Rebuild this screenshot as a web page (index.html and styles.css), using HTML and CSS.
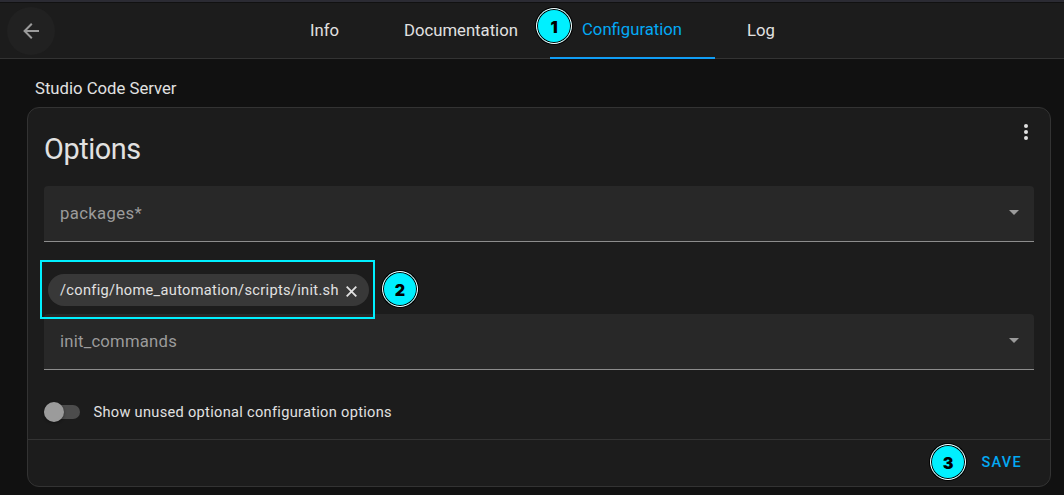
FILE: index.html
```html
<!DOCTYPE html>
<html lang="en">
<head>
<meta charset="utf-8">
<title>Studio Code Server</title>
<link rel="stylesheet" href="styles.css">
</head>
<body>
<header class="toolbar">
  <button class="back" aria-label="Back"><svg viewBox="0 0 24 24" width="24" height="24"><path d="M20 11v2H8l5.500 5.500-1.420 1.420L4.160 12l7.920-7.920L13.500 5.500 8 11z"/></svg></button>
  <nav class="tabs">
    <a class="tab info">Info</a>
    <a class="tab docs">Documentation</a>
    <a class="tab active">Configuration</a>
    <a class="tab log">Log</a>
  </nav>
</header>
<main class="content">
  <h2 class="addon">Studio Code Server</h2>
  <section class="card">
    <div class="card-body">
      <div class="card-head">
        <h1 class="title">Options</h1>
        <svg class="dots" viewBox="0 0 24 24" width="24" height="24"><circle cx="12" cy="6" r="2"/><circle cx="12" cy="12" r="2"/><circle cx="12" cy="18" r="2"/></svg>
      </div>
      <div class="field"><span class="label packages">packages*</span><i class="caret"></i></div>
      <div class="chips">
        <div class="chip"><span class="path">/config/home_automation/scripts/init.sh</span><svg viewBox="0 0 11 11" width="11" height="11"><path d="M.7.7l9.600 9.600M10.300.7L.7 10.300"/></svg></div>
      </div>
      <div class="field"><span class="label commands">init_commands</span><i class="caret"></i></div>
      <div class="switch-row"><span class="switch"><i class="thumb"></i></span><span class="switch-label">Show unused optional configuration options</span></div>
    </div>
    <footer class="card-foot"><button class="save">SAVE</button></footer>
  </section>
</main>
<div class="highlight"></div>
<span class="badge one">1</span>
<span class="badge two">2</span>
<span class="badge three">3</span>
</body>
</html>
```
FILE: styles.css
```css
* { box-sizing: border-box; }
body { margin: 0; height: 495px; overflow: hidden; position: relative; background: #111; color: #e1e1e1; font: 16.700px/24px Roboto, sans-serif; }
button { border: 0; padding: 0; background: none; font: inherit; }
.toolbar { height: 59px; display: flex; background: #1c1c1c; border-top: 2px solid #2b2b33; border-bottom: 1px solid #333; box-shadow: inset 0 1px #111; }
.back { width: 48px; height: 48px; margin: 5px 0 0 7px; border-radius: 50%; background: #212121; display: flex; align-items: center; justify-content: center; }
.back svg { fill: #9b9b9b; }
.tabs { display: flex; height: 57px; margin-left: 223px; }
.tab { height: 57px; padding: 17px 32px 0; white-space: nowrap; }
.info { width: 94px; }
.docs { width: 178px; }
.active { width: 165px; padding-top: 16px; color: #03a9f4; border-bottom: 2px solid #119df5; }
.content { padding: 18px 13px 0 27px; }
.addon { margin: 0 0 6px 8px; font-size: 16.700px; font-weight: 400; line-height: 24px; }
.card { height: 380px; border: 1px solid #333; border-radius: 12px; background: #1c1c1c; display: flex; flex-direction: column; }
.card-body { height: 331px; padding: 0 16px; }
.card-head { height: 78px; display: flex; justify-content: space-between; }
.title { margin: 17px 0 0; font-size: 28.800px; font-weight: 400; line-height: 48px; letter-spacing: -.4px; }
.dots { fill: #e1e1e1; margin: 12px -4px 0 0; }
.field { height: 56px; padding: 0 15px 0 16px; display: flex; align-items: center; justify-content: space-between; background: #282828; border-bottom: 1px solid #8d8d8d; border-radius: 4px 4px 0 0; color: #9b9b9b; }
.packages { letter-spacing: .36px; }
.commands { letter-spacing: .22px; }
.caret { border: 5px solid transparent; border-top-color: #9b9b9b; border-bottom: 0; margin-top: -3px; }
.chips { height: 72px; padding: 32px 4px 0; }
.chip { width: 321px; height: 32px; padding: 0 12px; border-radius: 16px; background: #383838; display: flex; align-items: center; justify-content: space-between; }
.chip svg { fill: none; stroke: #e1e1e1; stroke-width: 1.800; margin-top: 2px; flex: none; }
.path { font-size: 14.600px; letter-spacing: .32px; }
.switch-row { height: 84px; display: flex; align-items: center; gap: 13.500px; font-size: 14.600px; }
.switch { width: 36px; height: 14px; border-radius: 7px; background: #4c4c4c; display: flex; align-items: center; }
.thumb { width: 20px; height: 20px; border-radius: 50%; background: #9b9b9b; flex: none; box-shadow: 0 1px 3px #0006; }
.switch-label { letter-spacing: .3px; }
.card-foot { flex: 1; border-top: 1px solid #333; display: flex; justify-content: flex-end; align-items: center; padding-right: 28px; }
.save { color: #03a9f4; font-size: 14.500px; font-weight: 500; letter-spacing: 1.300px; }
.highlight { position: absolute; left: 40px; top: 260px; width: 335px; height: 59px; border: 2px solid #00f0ff; }
.badge { position: absolute; width: 36px; height: 36px; border-radius: 50%; background: #00f0ff; border: 1px solid #fff; box-shadow: inset 0 0 0 1px #000, 0 0 0 1px #000; color: #000; font: 900 16px/36px Inter, sans-serif; text-align: center; }
.one { left: 536px; top: 8px; }
.two { left: 382px; top: 271px; }
.three { left: 930px; top: 444px; }
```
